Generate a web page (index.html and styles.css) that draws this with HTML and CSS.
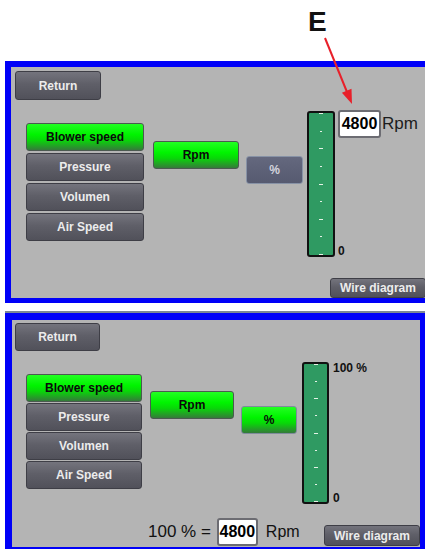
FILE: index.html
```html
<!DOCTYPE html>
<html>
<head>
<link rel="stylesheet" href="styles.css">
</head>
<body>
<div class="page">

    <div class="callout">E</div>
    <svg class="arrow" width="425" height="120" viewBox="0 0 425 120">
        <line x1="325" y1="38" x2="347" y2="92" stroke="#e8202a" stroke-width="2"/>
        <polygon points="352,104 351.5,88.8 341.9,92.7" fill="#e8202a"/>
    </svg>

    <div class="screen screen-a">
        <div class="top">
            <button class="btn gray ret">Return</button>
        </div>
        <div class="work">
            <div class="menu">
                <button class="btn green">Blower speed</button>
                <button class="btn gray">Pressure</button>
                <button class="btn gray">Volumen</button>
                <button class="btn gray">Air Speed</button>
            </div>
            <button class="btn green unit">Rpm</button>
            <button class="btn pct off">%</button>
            <div class="bar">
                <i class="tick"></i><i class="tick"></i><i class="tick"></i>
                <i class="tick"></i><i class="tick"></i><i class="tick"></i>
                <i class="tick"></i><i class="tick"></i><i class="tick"></i>
            </div>
            <div class="side">
                <div class="readout">
                    <span class="val">4800</span>
                    <span class="unit-label">Rpm</span>
                </div>
                <span class="scale">0</span>
            </div>
        </div>
        <div class="foot">
            <button class="btn gray wire">Wire diagram</button>
        </div>
    </div>

    <div class="screen screen-b">
        <div class="top">
            <button class="btn gray ret">Return</button>
        </div>
        <div class="work">
            <div class="menu">
                <button class="btn green">Blower speed</button>
                <button class="btn gray">Pressure</button>
                <button class="btn gray">Volumen</button>
                <button class="btn gray">Air Speed</button>
            </div>
            <button class="btn green unit">Rpm</button>
            <button class="btn green pct">%</button>
            <div class="bar">
                <i class="tick"></i><i class="tick"></i><i class="tick"></i>
                <i class="tick"></i><i class="tick"></i><i class="tick"></i>
                <i class="tick"></i><i class="tick"></i><i class="tick"></i>
            </div>
            <div class="side">
                <span class="scale">100 %</span>
                <span class="scale">0</span>
            </div>
        </div>
        <div class="foot">
            <span class="eq">100 % =</span>
            <span class="val">4800</span>
            <span class="unit-label">Rpm</span>
            <button class="btn gray wire">Wire diagram</button>
        </div>
    </div>

</div>
</body>
</html>
```

FILE: styles.css
```css
body {
    margin: 0;
    background-color: #fff;
    font-family: "Liberation Sans", Arial, sans-serif;
    color: #111;
}

.page {
    position: relative;
    width: 425px;
    height: 549px;
    overflow: hidden;
}

.callout {
    height: 53px;
    padding: 8px 0 0 308px;
    font-size: 28px;
    line-height: 28px;
    font-weight: bold;
    color: #111;
}

.arrow {
    position: absolute;
    left: 0;
    top: 0;
}

/* panels */

.screen {
    display: flex;
    flex-direction: column;
    margin-left: 5px;
    background-color: #b4b4b4;
}

.screen-a {
    width: 414px;
    height: 231px;
    border: 6px solid #0000f8;
    border-right: 0;
    border-bottom-width: 5px;
}

.screen-b {
    width: 408px;
    height: 227px;
    margin-top: 10px;
    border: 7px solid #0000f8;
    border-right-width: 5px;
    border-bottom-width: 2px;
    box-shadow: 0 -2px 0 #7c8795;
}

.work {
    display: flex;
    align-items: flex-start;
}

.menu {
    display: flex;
    flex-direction: column;
}

.menu .btn {
    height: 28px;
}

/* buttons */

.btn {
    display: flex;
    align-items: center;
    justify-content: center;
    box-sizing: border-box;
    padding: 0;
    font-family: "Liberation Sans", Arial, sans-serif;
    font-size: 12px;
    font-weight: bold;
    border: 1px solid #3e3e46;
    border-radius: 3px;
}

.gray {
    background: linear-gradient(#74747d, #5f5f68 45%, #51515a);
    color: #ececec;
}

.green {
    background: linear-gradient(#22ff22, #00f400 40%, #08d808 62%, #357a3a);
    border-color: #4b5a50;
    color: #0a0a0a;
}

.btn.pct.off {
    background: linear-gradient(#64687e, #565a70);
    border-color: #8792a6;
    color: #d4d4de;
}

.screen-b .pct {
    border-color: #7f8b9c;
}

.wire {
    width: 96px;
    font-size: 12px;
}

/* gauge */

.bar {
    display: flex;
    flex-direction: column;
    justify-content: space-between;
    align-items: center;
    box-sizing: border-box;
    padding: 0;
    border: 2px solid #111;
    border-radius: 3px;
    background-color: #2f9a62;
}

.tick {
    display: block;
    width: 4px;
    height: 1px;
    background-color: #e4f2e6;
}

.tick:nth-child(even) {
    width: 2px;
}

.side {
    display: flex;
    flex-direction: column;
    justify-content: space-between;
    align-items: flex-start;
}

.scale {
    font-size: 12px;
    line-height: 12px;
    font-weight: bold;
    color: #111;
}

.readout {
    display: flex;
    align-items: center;
}

.val {
    display: flex;
    align-items: center;
    justify-content: center;
    box-sizing: border-box;
    height: 28px;
    border: 2px solid #6c6c72;
    border-radius: 3px;
    background-color: #fff;
    font-size: 16px;
    font-weight: bold;
    color: #000;
}

.unit-label {
    font-size: 17px;
    line-height: 28px;
    color: #1c1c1c;
}

/* first panel */

.screen-a .top {
    padding: 4px 0 0 4px;
}

.screen-a .ret {
    width: 86px;
    height: 29px;
}

.screen-a .work {
    margin-top: 10px;
}

.screen-a .menu {
    width: 118px;
    gap: 2px;
    margin: 13px 0 0 15px;
}

.screen-a .unit {
    width: 86px;
    height: 28px;
    margin: 31px 0 0 9px;
}

.screen-a .pct {
    width: 57px;
    height: 28px;
    margin: 46px 0 0 7px;
}

.screen-a .bar {
    width: 28px;
    height: 146px;
    margin: 1px 0 0 4px;
}

.screen-a .side {
    height: 147px;
    margin-left: 3px;
}

.screen-a .val {
    width: 43px;
}

.screen-a .unit-label {
    margin-left: 1px;
}

.screen-a .foot {
    margin-top: auto;
    padding-left: 319px;
}

.screen-a .wire {
    height: 20px;
}

/* second panel */

.screen-b .top {
    padding: 3px 0 0 3px;
}

.screen-b .ret {
    width: 85px;
    height: 28px;
}

.screen-b .work {
    margin-top: 11px;
}

.screen-b .menu {
    width: 116px;
    gap: 1px;
    margin: 12px 0 0 14px;
}

.screen-b .unit {
    width: 84px;
    height: 28px;
    margin: 29px 0 0 8px;
}

.screen-b .pct {
    width: 56px;
    height: 28px;
    margin: 44px 0 0 7px;
}

.screen-b .bar {
    width: 27px;
    height: 142px;
    margin-left: 5px;
}

.screen-b .side {
    height: 142px;
    margin-left: 4px;
}

.screen-b .foot {
    display: flex;
    align-items: flex-end;
    margin-top: auto;
    padding: 0 0 1px 136px;
}

.eq {
    font-size: 17px;
    line-height: 28px;
    color: #111;
}

.screen-b .val {
    width: 41px;
    margin-left: 6px;
}

.screen-b .unit-label {
    margin-left: 8px;
    font-size: 16px;
    color: #111;
}

.screen-b .wire {
    height: 21px;
    margin-left: auto;
}
```
